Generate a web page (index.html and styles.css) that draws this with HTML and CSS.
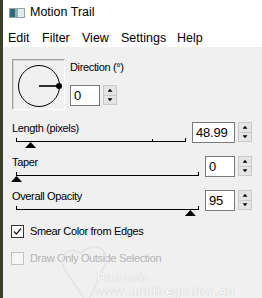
FILE: index.html
```html
<!DOCTYPE html>
<html>
<head>
    <title>Motion Trail</title>
    <link rel="stylesheet" href="styles.css">
</head>
<body>
<div class="window">
    <div class="titlebar">
        <svg class="app-icon" width="16" height="10" viewBox="0 0 16 10">
            <rect x="0.5" y="0.5" width="15" height="9" fill="#e4e9eb" stroke="#9aa4a8"/>
            <rect x="1" y="1" width="5" height="8" fill="#2f6b76"/>
            <rect x="6" y="1" width="3" height="8" fill="#8fb0b6"/>
        </svg>
        <span class="title">Motion Trail</span>
    </div>
    <nav class="menubar">
        <span>Edit</span>
        <span>Filter</span>
        <span>View</span>
        <span>Settings</span>
        <span>Help</span>
    </nav>

    <main class="dialog">
        <!-- direction -->
        <div class="direction">
            <div class="preview">
                <svg width="51" height="49" viewBox="0 0 51 49">
                    <circle cx="26" cy="26" r="20.5" fill="none" stroke="#000" stroke-width="1"/>
                    <line x1="26" y1="26" x2="45" y2="26" stroke="#000" stroke-width="1.6"/>
                    <circle cx="46" cy="26" r="3" fill="#000"/>
                </svg>
            </div>
            <div class="direction-ctrl">
                <div class="label">Direction (°)</div>
                <div class="spin-group">
                    <input class="num" type="text" value="0">
                    <div class="spin"><span class="up"></span><span class="down"></span></div>
                </div>
            </div>
        </div>

        <!-- sliders -->
        <div class="param">
            <div class="slider-col">
                <div class="label">Length (pixels)</div>
                <div class="track">
                    <div class="track-line"></div>
                    <span class="tick-mid" style="left: 80%"></span>
                    <span class="thumb" style="left: 8.3%"></span>
                </div>
            </div>
            <div class="spin-group">
                <input class="num num-wide" type="text" value="48.99">
                <div class="spin"><span class="up"></span><span class="down"></span></div>
            </div>
        </div>

        <div class="param">
            <div class="slider-col">
                <div class="label">Taper</div>
                <div class="track">
                    <div class="track-line"></div>
                    <span class="thumb" style="left: 0%"></span>
                </div>
            </div>
            <div class="spin-group">
                <input class="num" type="text" value="0">
                <div class="spin"><span class="up"></span><span class="down"></span></div>
            </div>
        </div>

        <div class="param">
            <div class="slider-col">
                <div class="label">Overall Opacity</div>
                <div class="track">
                    <div class="track-line"></div>
                    <span class="thumb" style="left: 95%"></span>
                </div>
            </div>
            <div class="spin-group">
                <input class="num" type="text" value="95">
                <div class="spin"><span class="up"></span><span class="down"></span></div>
            </div>
        </div>

        <!-- options -->
        <label class="check">
            <span class="box">
                <svg width="11" height="11" viewBox="0 0 11 11"><path d="M2 5.5 L4.5 8 L9 2.5" fill="none" stroke="#222" stroke-width="1.3"/></svg>
            </span>
            Smear Color from Edges
        </label>
        <label class="check disabled">
            <span class="box"></span>
            Draw Only Outside Selection
        </label>
    </main>

    <!-- faint watermark over the dialog -->
    <div class="watermark">
        <svg class="heart" width="90" height="60" viewBox="0 0 90 60">
            <path d="M30 62 L10 32 C2 18 14 6 26 16 C34 4 56 8 50 26 L34 62" fill="none" stroke="#e4e4e4" stroke-width="1.5"/>
        </svg>
        <div class="wm-name">Pinuccia</div>
        <div class="wm-url">www.mildiregrafica.eu</div>
    </div>
</div>
</body>
</html>
```

FILE: styles.css
```css
* {
    box-sizing: border-box;
}
body {
    margin: 0;
    width: 262px;
    height: 298px;
    overflow: hidden;
    background-color: #f0f0f0;
    font-family: "Liberation Sans", Arial, sans-serif;
    color: #000;
}
.window {
    position: relative;
    height: 298px;
    border-left: 3px solid #3e3c2d; /* edge of the window behind */
    background-color: #f0f0f0;
}

/* --- Title and menu --- */
.titlebar {
    height: 29px;
    background-color: #fff;
    display: flex;
    align-items: flex-start;
    gap: 5px;
    padding: 4px 0 0 6px;
}
.app-icon {
    margin-top: 4px;
}
.title {
    font-size: 12.5px;
    line-height: 16px;
}
.menubar {
    height: 18px;
    background-color: #fff;
    display: grid;
    grid-template-columns: 34px 40px 39px 56px auto;
    padding-left: 5px;
    font-size: 12.5px;
    line-height: 18px;
}

/* --- Dialog body --- */
.dialog {
    padding: 12px 10px 0 9px;
    font-size: 11px;
    letter-spacing: -0.35px;
}
.label {
    line-height: 13px;
    white-space: nowrap;
}
.direction {
    display: flex;
    gap: 5px;
}
.preview {
    width: 53px;
    height: 51px;
    border: 1px solid;
    border-color: #a0a0a0 #fff #fff #a0a0a0;
    box-shadow: inset 1px 1px 0 #d4d4d4;
}
.preview svg {
    display: block;
}
.direction-ctrl {
    padding-top: 2px;
    display: flex;
    flex-direction: column;
    align-items: flex-start;
    gap: 11px;
}

/* number box with spinner */
.spin-group {
    display: flex;
    gap: 3px;
    align-items: flex-start;
}
.num {
    width: 30px;
    height: 21px;
    margin: 0;
    padding: 0 3px;
    border: 1px solid #7a7a7a;
    background-color: #fff;
    font-family: "Liberation Sans", sans-serif;
    font-size: 13px;
    letter-spacing: -0.2px;
    color: #000;
    outline: none;
}
.num-wide {
    width: 43px;
}
.spin {
    width: 14px;
    height: 20px;
    display: flex;
    flex-direction: column;
    border: 1px solid #cacaca;
    background-color: #e5e5e5;
}
.spin span {
    flex: 1;
    display: flex;
    align-items: center;
    justify-content: center;
}
.spin .up {
    border-bottom: 1px solid #cacaca;
}
.spin span::before {
    content: "";
    width: 5px;
    height: 3px;
    background-color: #000;
    clip-path: polygon(50% 0, 100% 100%, 0 100%);
}
.spin .down::before {
    clip-path: polygon(0 0, 100% 0, 50% 100%);
}

/* slider rows */
.param {
    display: flex;
    gap: 6px;
    margin-top: 12px;
}
.param + .param {
    margin-top: 7px;
}
.slider-col {
    flex: 1;
}
.track {
    position: relative;
    height: 14px;
    padding-top: 6px;
    margin-left: 4px;
}
.track-line {
    height: 1px;
    background-color: #000;
}
.track::before,
.track::after {
    content: "";
    position: absolute;
    top: 3px;
    width: 1px;
    height: 4px;
    background-color: #000;
}
.track::before {
    left: 0;
}
.track::after {
    right: 0;
}
.tick-mid {
    position: absolute;
    top: 4px;
    width: 1px;
    height: 3px;
    background-color: #000;
}
.thumb {
    position: absolute;
    top: 7px;
    width: 11px;
    height: 6px;
    margin-left: -5px;
    background-color: #000;
    clip-path: polygon(50% 0, 100% 100%, 0 100%);
}

/* check boxes */
.check {
    display: flex;
    align-items: center;
    gap: 6px;
    height: 13px;
    line-height: 13px;
    margin-left: -1px;
    margin-top: 8px;
    white-space: nowrap;
}
.check + .check {
    margin-top: 14px;
}
.box {
    width: 13px;
    height: 13px;
    border: 1px solid #333;
    background-color: #fff;
    display: flex;
    align-items: center;
    justify-content: center;
}
.check.disabled {
    color: #b4b4b4;
}
.check.disabled .box {
    border-color: #c4c4c4;
    background-color: #f6f6f6;
}

/* --- Watermark --- */
.watermark {
    position: absolute;
    left: 52px;
    top: 238px;
    width: 210px;
    height: 60px;
    pointer-events: none;
}
.heart {
    position: absolute;
    left: 0;
    top: 0;
}
.wm-name,
.wm-url {
    position: absolute;
    left: 42px;
    font-weight: bold;
    font-size: 12px;
    line-height: 12px;
    color: #f7f7f7;
    text-shadow: 0 0 1px #b8b8b8;
    letter-spacing: 0.5px;
}
.wm-name {
    top: 34px;
}
.wm-url {
    top: 48px;
}
```
